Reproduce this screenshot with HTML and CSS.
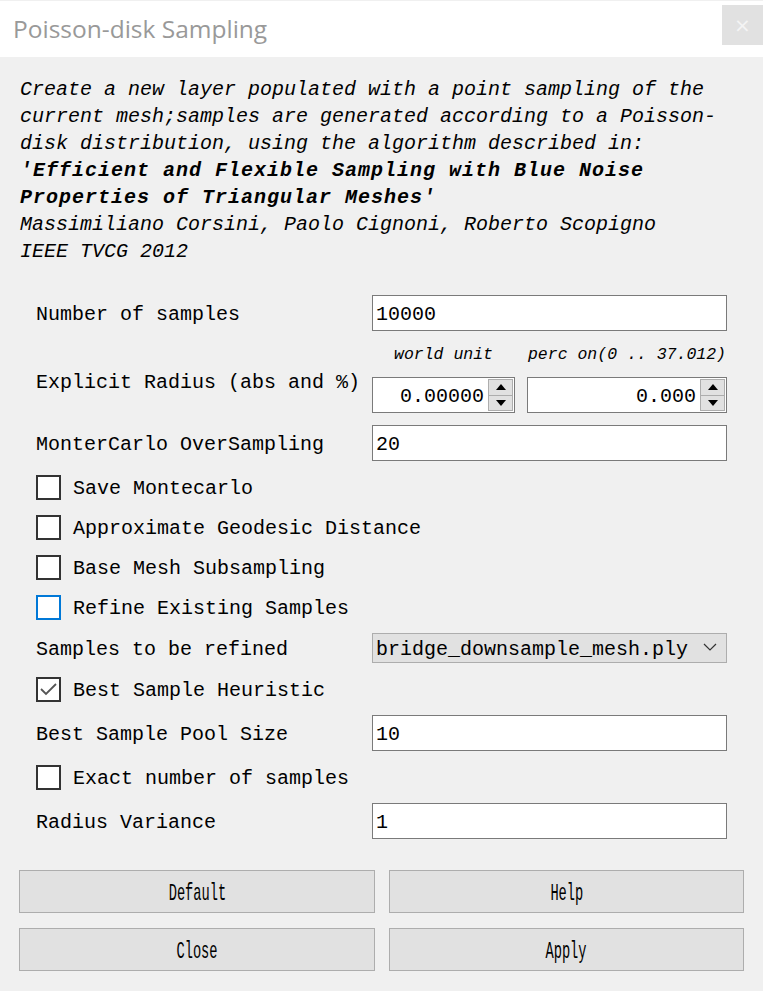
FILE: index.html
```html
<!DOCTYPE html>
<html>
<head>
<meta charset="utf-8">
<link rel="stylesheet" href="styles.css">
</head>
<body>
<div class="titlebar">
  <span class="title">Poisson-disk Sampling</span>
  <div class="closebtn">×</div>
</div>
<div class="desc">
  <div>Create a new layer populated with a point sampling of the</div>
  <div>current mesh;samples are generated according to a Poisson-</div>
  <div>disk distribution, using the algorithm described in:</div>
  <div class="b">'Efficient and Flexible Sampling with Blue Noise</div>
  <div class="b">Properties of Triangular Meshes'</div>
  <div>Massimiliano Corsini, Paolo Cignoni, Roberto Scopigno</div>
  <div>IEEE TVCG 2012</div>
</div>
<div class="form">
  <div class="label">Number of samples</div>
  <div class="field">10000</div>

  <div class="label radius">Explicit Radius (abs and %)</div>
  <div class="sublabels">
    <span class="sub1">world unit</span>
    <span class="sub2">perc on(0 .. 37.012)</span>
  </div>
  <div class="spins">
    <div class="spin s1">
      <span class="val">0.00000</span>
      <div class="arrows">
        <div class="arr"><svg width="12" height="8" viewBox="0 0 12 8"><path d="M6 1 L11 7 L1 7 Z" fill="#000"/></svg></div>
        <div class="arr"><svg width="12" height="8" viewBox="0 0 12 8"><path d="M6 7 L11 1 L1 1 Z" fill="#000"/></svg></div>
      </div>
    </div>
    <div class="spin s2">
      <span class="val">0.000</span>
      <div class="arrows">
        <div class="arr"><svg width="12" height="8" viewBox="0 0 12 8"><path d="M6 1 L11 7 L1 7 Z" fill="#000"/></svg></div>
        <div class="arr"><svg width="12" height="8" viewBox="0 0 12 8"><path d="M6 7 L11 1 L1 1 Z" fill="#000"/></svg></div>
      </div>
    </div>
  </div>

  <div class="label">MonterCarlo OverSampling</div>
  <div class="field">20</div>

  <div class="check"><span class="box"></span><span>Save Montecarlo</span></div>
  <div class="check"><span class="box"></span><span>Approximate Geodesic Distance</span></div>
  <div class="check"><span class="box"></span><span>Base Mesh Subsampling</span></div>
  <div class="check"><span class="box focus"></span><span>Refine Existing Samples</span></div>

  <div class="label">Samples to be refined</div>
  <div class="combo"><span>bridge_downsample_mesh.ply</span>
    <svg class="chev" width="14" height="8" viewBox="0 0 14 8"><path d="M1 1 L7 7 L13 1" fill="none" stroke="#333" stroke-width="1.2"/></svg>
  </div>

  <div class="check"><span class="box"><svg width="21" height="21" viewBox="0 0 21 21"><path d="M3 10 L8 15 L18 5" fill="none" stroke="#555" stroke-width="1.8"/></svg></span><span>Best Sample Heuristic</span></div>

  <div class="label">Best Sample Pool Size</div>
  <div class="field">10</div>

  <div class="check"><span class="box"></span><span>Exact number of samples</span></div>

  <div class="label">Radius Variance</div>
  <div class="field">1</div>
</div>
<div class="buttons">
  <div class="btn"><span>Default</span></div>
  <div class="btn"><span>Help</span></div>
  <div class="btn"><span>Close</span></div>
  <div class="btn"><span>Apply</span></div>
</div>
</body>
</html>
```
FILE: styles.css
```css
html, body {
  margin: 0;
  padding: 0;
  background: #f0f0f0;
  width: 763px;
  height: 991px;
  overflow: hidden;
  font-family: "Liberation Mono", "DejaVu Sans Mono", monospace;
  font-size: 20px;
  color: #000;
}
.titlebar {
  margin-top: 1px;
  height: 56px;
  background: #fff;
  display: flex;
  align-items: center;
  justify-content: space-between;
}
.title {
  font-family: "Open Sans", "Noto Sans", sans-serif;
  font-size: 24.5px;
  color: #999;
  padding-left: 13px;
  padding-bottom: 2px;
}
.closebtn {
  width: 41px;
  height: 40px;
  background: #e1e1e1;
  color: #f4f4f4;
  font-family: "DejaVu Sans", sans-serif;
  font-size: 20px;
  display: flex;
  align-items: center;
  justify-content: center;
  margin-top: -8px;
}
.desc {
  margin-top: 19px;
  padding-left: 20px;
  font-style: italic;
  line-height: 27px;
  white-space: nowrap;
}
.desc .b {
  font-weight: bold;
  letter-spacing: 1px;
}
.form {
  margin-top: 30px;
  display: grid;
  grid-template-columns: 336px 355px;
  row-gap: 12px;
  padding-left: 36px;
  align-items: center;
}
.label {
  white-space: nowrap;
  padding-top: 2px;
}
.label.radius {
  grid-row: span 2;
  align-self: center;
  padding-top: 8px;
}
.field {
  height: 34px;
  border: 1px solid #7a7a7a;
  background: #fff;
  display: flex;
  align-items: center;
  padding-left: 3px;
  padding-top: 2px;
  box-sizing: border-box;
  height: 36px;
}
.sublabels {
  height: 22px;
  display: flex;
  align-items: center;
  font-style: italic;
  font-size: 16.5px;
  white-space: nowrap;
}
.sub1 {
  width: 143px;
  text-align: center;
}
.sub2 {
  flex: 1;
  text-align: right;
  padding-right: 1px;
}
.spins {
  display: flex;
  gap: 12px;
}
.spin {
  height: 34px;
  border: 1px solid #7a7a7a;
  background: #fff;
  display: flex;
  align-items: center;
  justify-content: flex-end;
}
.spin.s1 { width: 141px; }
.spin.s2 { width: 198px; }
.val {
  padding-right: 4px;
  padding-top: 2px;
}
.arrows {
  width: 25px;
  height: 32px;
  margin-right: 1px;
  display: flex;
  flex-direction: column;
}
.arr {
  flex: 1;
  background: #e1e1e1;
  border: 1px solid #adadad;
  display: flex;
  align-items: center;
  justify-content: center;
}
.arr + .arr {
  border-top: none;
}
.check {
  grid-column: span 2;
  height: 28px;
  display: flex;
  align-items: center;
  white-space: nowrap;
}
.check > span:last-child {
  padding-top: 2px;
}
.box {
  width: 21px;
  height: 21px;
  border: 2px solid #333;
  background: #fff;
  margin-right: 12px;
  display: flex;
  align-items: center;
  justify-content: center;
}
.box.focus {
  border-color: #0078d7;
}
.combo {
  height: 28px;
  border: 1px solid #adadad;
  background: #e1e1e1;
  display: flex;
  align-items: center;
  justify-content: space-between;
  padding-left: 3px;
  padding-right: 9px;
}
.combo > span {
  padding-top: 2px;
}
.chev {
  margin-top: -2px;
}
.buttons {
  margin-top: 31px;
  padding-left: 19px;
  display: grid;
  grid-template-columns: 356px 355px;
  column-gap: 14px;
  row-gap: 15px;
}
.btn {
  height: 41px;
  border: 1px solid #adadad;
  background: #e1e1e1;
  display: flex;
  align-items: center;
  justify-content: center;
  font-size: 24px;
}
.btn span {
  display: inline-block;
  transform: scaleX(0.57);
  padding-top: 3px;
}
```
